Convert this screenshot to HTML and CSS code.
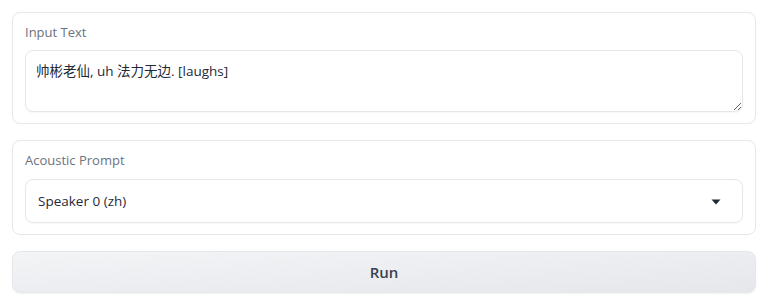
FILE: index.html
```html
<!DOCTYPE html>
<html lang="en">
<head>
    <meta charset="UTF-8">
    <title>TTS Demo</title>
    <link rel="stylesheet" href="styles.css">
</head>
<body>
    <div class="app">
        <div class="block">
            <label class="label" for="input-text">Input Text</label>
            <textarea id="input-text" class="textbox" rows="2">帅彬老仙, uh 法力无边. [laughs]</textarea>
        </div>

        <div class="block">
            <div class="label">Acoustic Prompt</div>
            <div class="dropdown">
                <span>Speaker 0 (zh)</span>
                <svg class="caret" width="10" height="6" viewBox="0 0 10 6"><path d="M0.5 0.5h9L5 5.5z" fill="#1f2937"/></svg>
            </div>
        </div>

        <button class="run-btn">Run</button>
    </div>
</body>
</html>
```

FILE: styles.css
```css
body {
    margin: 0;
    font-family: 'Open Sans', 'Noto Sans CJK SC', sans-serif;
    background: white;
    color: #1f2937;
}
.app {
    display: flex;
    flex-direction: column;
    gap: 16px;
    padding: 12px 10px 12px 12px;
}
.block {
    border: 1px solid #e5e7eb;
    border-radius: 8px;
    padding: 12px 12px 11px;
    display: flex;
    flex-direction: column;
}
.label {
    font-size: 13px;
    line-height: 14px;
    color: #6b7280;
    margin-bottom: 11px;
}
.textbox {
    display: block;
    box-sizing: border-box;
    height: 62px;
    padding: 10px;
    border: 1px solid #e5e7eb;
    border-radius: 8px;
    box-shadow: 0 1px 2px rgba(0,0,0,0.04);
    font-family: 'Open Sans', 'Noto Sans CJK SC', sans-serif;
    font-size: 13.5px;
    line-height: 20px;
    color: #1f2937;
    resize: vertical;
}
.dropdown {
    box-sizing: border-box;
    height: 44px;
    margin-top: 1px;
    display: flex;
    align-items: center;
    justify-content: space-between;
    padding: 0 21px 0 12px;
    border: 1px solid #e5e7eb;
    border-radius: 8px;
    box-shadow: 0 1px 2px rgba(0,0,0,0.04);
    font-size: 13.5px;
}
.caret {margin-top: 2px;}
.run-btn {
    height: 42px;
    border: 1px solid #e5e7eb;
    border-radius: 8px;
    background: linear-gradient(to bottom right, #f3f4f6, #e5e7eb);
    font-family: 'Open Sans', sans-serif;
    font-size: 15px;
    font-weight: 600;
    color: #374151;
    box-shadow: 0 1px 2px rgba(0,0,0,0.05);
    cursor: pointer;
}
```
